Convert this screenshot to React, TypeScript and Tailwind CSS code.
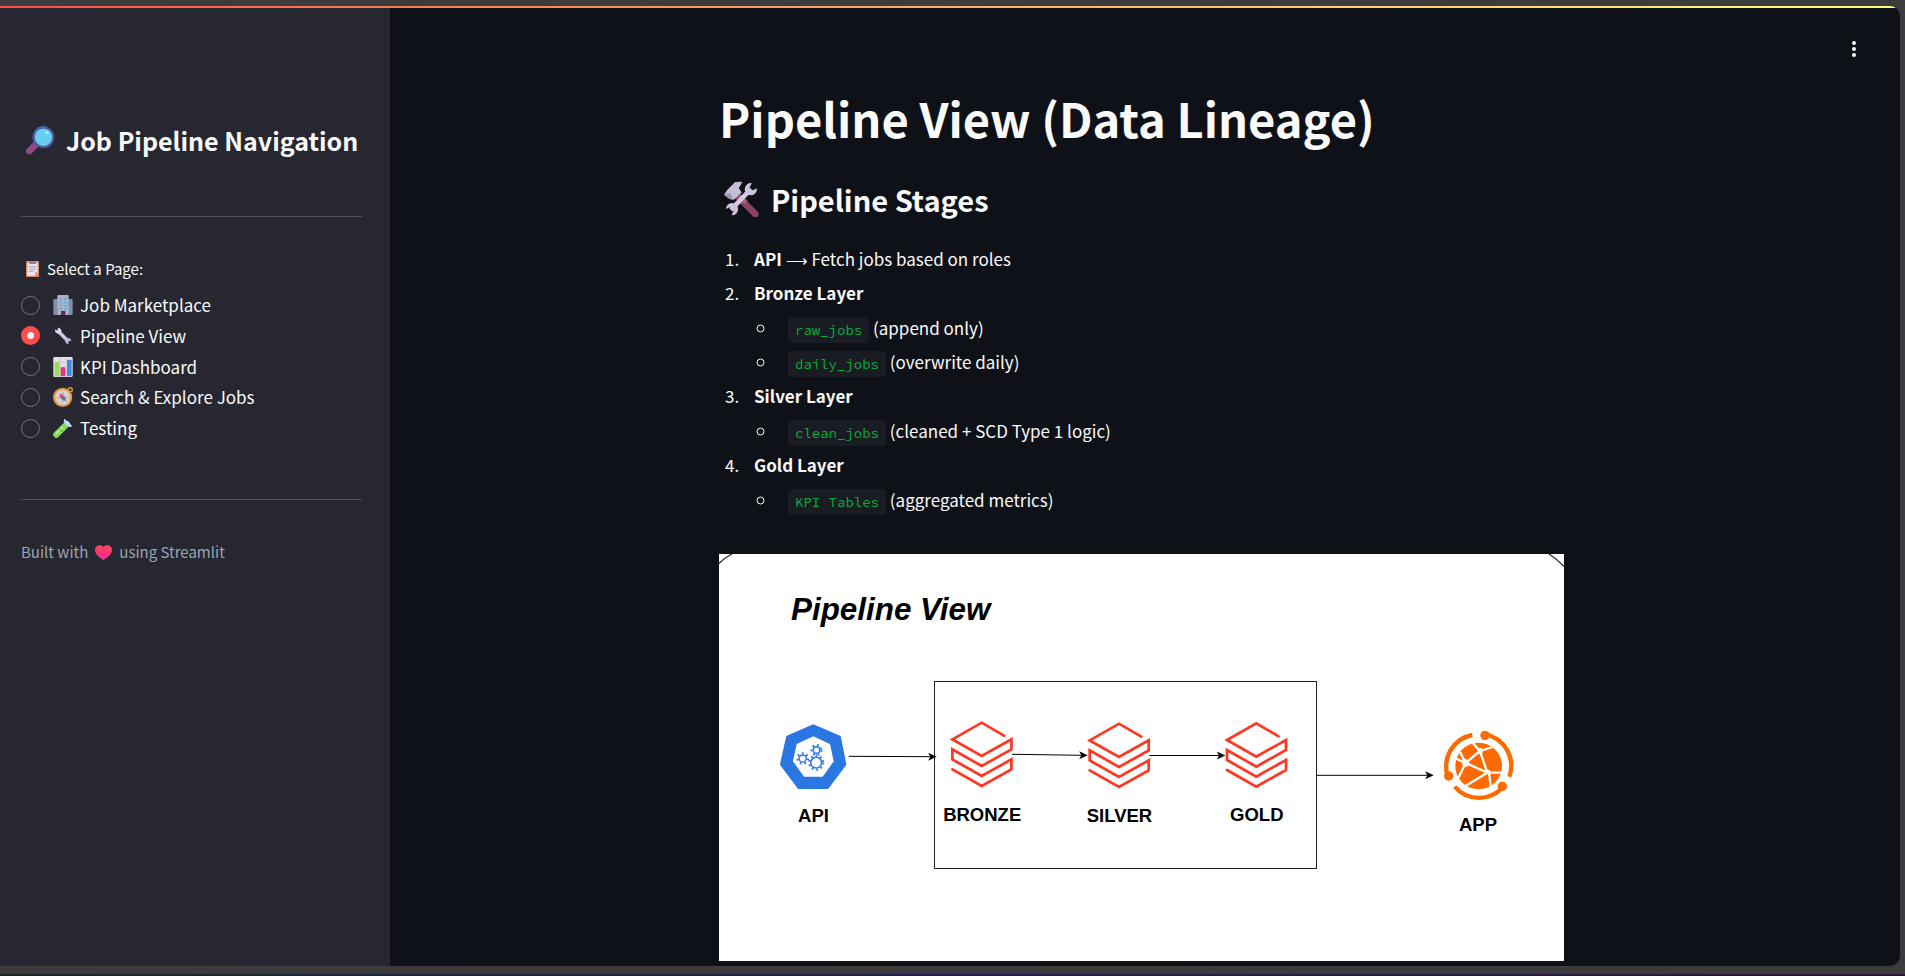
import { useState } from "react";
import type { ReactNode } from "react";

function MagnifierIcon({ className }: { className: string }) {
  return (
    <svg viewBox="0 0 88 88" className={className} aria-hidden="true">
      <path d="M10 76 L32 54" stroke="#8d4b8a" strokeWidth="20" strokeLinecap="round" />
      <path d="M31 55 L36 50" stroke="#5a3f80" strokeWidth="12" />
      <circle cx="53" cy="34" r="30" fill="#62d0ee" stroke="#51549a" strokeWidth="7" />
      <path d="M26 22 A30 30 0 0 1 60 3" fill="none" stroke="#3f6fb0" strokeWidth="5" />
      <circle cx="64" cy="20" r="5" fill="#b9e9fb" />
    </svg>
  );
}

function ToolsIcon({ className }: { className: string }) {
  return (
    <svg viewBox="0 0 100 100" className={className} aria-hidden="true">
      <path d="M40 42 L90 92" stroke="#8a4566" strokeWidth="18" strokeLinecap="round" />
      <path d="M46 42 L64 60" stroke="#a8665f" strokeWidth="12" />
      <path d="M3 38 L12 24 L34 3 L54 2 L44 20 L52 32 L30 52 L18 50 Z" fill="#c4bdd3" />
      <path d="M3 38 L18 50 L30 52 L20 34 Z" fill="#9c93b0" />
      <path d="M22 80 L76 24" stroke="#d3cbe0" strokeWidth="13" />
      <path d="M94 20 A17 17 0 1 1 80 6 L74 18 L82 26 Z" fill="#cdc3de" />
      <path d="M8 78 A17 17 0 1 1 24 95 L30 82 L20 72 Z" fill="#cdc3de" />
    </svg>
  );
}

function ClipboardIcon({ className }: { className: string }) {
  return (
    <svg viewBox="0 0 39 48" className={className} aria-hidden="true">
      <rect width="39" height="48" rx="2" fill="#d98b5e" />
      <path d="M4 5 H35 V34 L27 44 H4 Z" fill="#ebe3f2" />
      <path d="M35 34 L27 44 V34 Z" fill="#bda9c9" />
      <rect x="10" y="1" width="20" height="8" rx="3" fill="#8b8498" />
      <path d="M9 17 H30 M9 24 H30 M9 31 H22" stroke="#a9a0b8" strokeWidth="3" />
    </svg>
  );
}

function OfficeIcon({ className }: { className: string }) {
  return (
    <svg viewBox="0 0 58 60" className={className} aria-hidden="true">
      <rect x="0" y="12" width="58" height="48" rx="3" fill="#8f899f" />
      <rect x="12" y="0" width="34" height="60" rx="3" fill="#b5adc1" />
      <path d="M22 9 V45 M36 9 V45" stroke="#41bdf2" strokeWidth="7" strokeDasharray="6 4" />
      <path d="M6 20 V54 M52 20 V54" stroke="#41a8dc" strokeWidth="4" strokeDasharray="6 4" />
      <rect x="23" y="48" width="13" height="12" fill="#4a3c55" />
    </svg>
  );
}

function WrenchIcon({ className }: { className: string }) {
  return (
    <svg viewBox="0 0 58 58" className={className} aria-hidden="true">
      <path d="M16 16 L42 42" stroke="#cfc6dd" strokeWidth="10" />
      <path d="M5 10 L13 13 L15 4 A12 12 0 0 1 24 20 A12 12 0 0 1 5 10 Z" fill="#ded6ea" />
      <path d="M54 44 L46 43 L44 53 A12 12 0 0 1 36 36 A12 12 0 0 1 54 44 Z" fill="#c5bbd5" />
    </svg>
  );
}

function ChartIcon({ className }: { className: string }) {
  return (
    <svg viewBox="0 0 58 60" className={className} aria-hidden="true">
      <rect width="58" height="60" rx="4" fill="#e6dfed" />
      <path d="M0 15 H58 M0 30 H58 M0 45 H58 M20 0 V60 M39 0 V60" stroke="#c6bcd0" strokeWidth="2" />
      <rect x="4" y="15" width="14" height="43" rx="2" fill="#9bdc55" />
      <rect x="22" y="31" width="14" height="27" rx="2" fill="#e2347f" />
      <rect x="41" y="8" width="14" height="50" rx="2" fill="#3b8de0" />
    </svg>
  );
}

function CompassIcon({ className }: { className: string }) {
  return (
    <svg viewBox="0 0 58 58" className={className} aria-hidden="true">
      <circle cx="50" cy="8" r="6" fill="none" stroke="#d79a35" strokeWidth="4" />
      <circle cx="28" cy="30" r="25" fill="#dccfd4" stroke="#dd9a3c" strokeWidth="6" />
      <path d="M28 11 L32 26 L47 30 L32 34 L28 49 L24 34 L9 30 L24 26 Z" fill="#b3a4b0" />
      <path d="M17 18 L32 26 L24 34 Z" fill="#e03d5e" />
      <path d="M40 43 L32 26 L24 34 Z" fill="#6e6884" />
    </svg>
  );
}

function TestTubeIcon({ className }: { className: string }) {
  return (
    <svg viewBox="0 0 60 60" className={className} aria-hidden="true">
      <path d="M10 50 L42 18" stroke="#a9cdf0" strokeWidth="18" strokeLinecap="round" />
      <path d="M34 2 L58 24 L50 28 L32 10 Z" fill="#bfe0fb" />
      <path d="M10 50 L33 27" stroke="#86d94a" strokeWidth="17" strokeLinecap="round" />
      <path d="M11 46 L28 29" stroke="#c3f07c" strokeWidth="5" strokeLinecap="round" />
      <circle cx="26" cy="38" r="3" fill="#3ea63a" />
      <circle cx="19" cy="33" r="3" fill="#4db445" />
    </svg>
  );
}

function HeartIcon({ className }: { className: string }) {
  return (
    <svg viewBox="0 0 52 46" className={className} aria-hidden="true">
      <defs>
        <linearGradient id="heart" x1="0" y1="0" x2="0" y2="1">
          <stop offset="0" stopColor="#f74a5c" />
          <stop offset="0.6" stopColor="#fa2f76" />
          <stop offset="1" stopColor="#e63bb4" />
        </linearGradient>
      </defs>
      <path
        d="M26 6 C20 -3 0 -2 0 15 C0 29 14 38 26 46 C38 38 52 29 52 15 C52 -2 32 -3 26 6 Z"
        fill="url(#heart)"
      />
    </svg>
  );
}

const pages: { name: string; icon: ReactNode }[] = [
  { name: "Job Marketplace", icon: <OfficeIcon className="size-5" /> },
  { name: "Pipeline View", icon: <WrenchIcon className="size-5" /> },
  { name: "KPI Dashboard", icon: <ChartIcon className="size-5" /> },
  { name: "Search & Explore Jobs", icon: <CompassIcon className="size-5" /> },
  { name: "Testing", icon: <TestTubeIcon className="size-5" /> },
];

function Sidebar() {
  const [page, setPage] = useState("Pipeline View");
  return (
    <aside className="w-[390px] shrink-0 bg-[#262730] pl-[21px] pr-7 pt-[112px]">
      <h2 className="flex h-10 items-center gap-[11px] whitespace-nowrap pl-[5px] text-[25px] font-semibold leading-10">
        <MagnifierIcon className="size-[29px]" />
        Job Pipeline Navigation
      </h2>
      <hr className="mt-14 border-[#4d4e56]" />
      <fieldset className="mt-10">
        <legend className="flex h-6 items-center gap-2 pl-[5px] text-[15px] leading-6">
          <ClipboardIcon className="h-4 w-[13px]" />
          Select a Page:
        </legend>
        <div className="mt-[9px] flex h-[153px] flex-col justify-between">
          {pages.map((p) => (
            <label key={p.name} className="flex h-[30px] items-center text-[17px] leading-[30px]">
              <input
                type="radio"
                name="page"
                checked={page === p.name}
                onChange={() => setPage(p.name)}
                className="mr-[13px] size-[19px] appearance-none rounded-full border border-[#75767c] checked:border-[6px] checked:border-[#ff4b4b] checked:bg-[#f4f4f8]"
              />
              <span className="mr-[7px]">{p.icon}</span>
              {p.name}
            </label>
          ))}
        </div>
      </fieldset>
      <hr className="mt-14 border-[#4d4e56]" />
      <p className="mt-10 flex h-6 items-center gap-[7px] text-[15px] leading-6 text-[#9aa3b4]">
        Built with
        <HeartIcon className="h-[15px] w-[17px]" />
        using Streamlit
      </p>
    </aside>
  );
}

function Code({ children }: { children: string }) {
  return (
    <code className="rounded bg-[#1a1c24] px-[7px] py-1 font-['Source_Code_Pro','DejaVu_Sans_Mono',monospace] text-[14px] leading-5 text-[#09ab3b]">
      {children}
    </code>
  );
}

const stages = [
  { name: "API", note: "Fetch jobs based on roles", tables: [] },
  {
    name: "Bronze Layer",
    note: "",
    tables: [
      ["raw_jobs", "(append only)"],
      ["daily_jobs", "(overwrite daily)"],
    ],
  },
  { name: "Silver Layer", note: "", tables: [["clean_jobs", "(cleaned + SCD Type 1 logic)"]] },
  { name: "Gold Layer", note: "", tables: [["KPI Tables", "(aggregated metrics)"]] },
];

function Layers({ x, y, label }: { x: number; y: number; label: string }) {
  return (
    <g transform={`translate(${x} ${y})`}>
      <path
        d="M22.3 13 L0 0 L-29.3 16.7 L0 33.3 L29.7 16.7 V26.7 L0 43.3 L-29.3 26.7 V36.7 L0 53.3 L29.7 36.7 V46.7 L0 63.3 L-29.3 46.7"
        fill="none"
        stroke="#ff3621"
        strokeWidth="2.7"
        strokeLinecap="round"
      />
      <text x="0.5" y="98" textAnchor="middle" fontSize="18.5">
        {label}
      </text>
    </g>
  );
}

function Gear({ x, y, r }: { x: number; y: number; r: number }) {
  return (
    <g transform={`translate(${x} ${y})`} fill="none" stroke="#2a76e3">
      <circle r={r} strokeWidth="1.5" />
      <circle r={r + 1.6} strokeWidth="2.2" strokeDasharray="1.7 2.9" />
    </g>
  );
}

function Arrow({ x1, y1, x2, y2 }: { x1: number; y1: number; x2: number; y2: number }) {
  return (
    <g>
      <path d={`M${x1} ${y1} L${x2 - 6} ${y2}`} stroke="#000" strokeWidth="1" />
      <path d={`M${x2} ${y2} l-8.5 -4 l2.2 4 l-2.2 4 Z`} fill="#000" />
    </g>
  );
}

function PipelineDiagram() {
  return (
    <svg
      viewBox="0 0 845 407"
      className="block w-full bg-white font-['Liberation_Sans',Arial,sans-serif] font-bold"
      role="img"
      aria-label="Pipeline View"
    >
      <path d="M0 9.5 Q6 3.5 13 0 M830 0 Q838 5 845 12.5" fill="none" stroke="#333" strokeWidth="1.3" />
      <text x="72" y="66" fontSize="31.4" fontStyle="italic">
        Pipeline View
      </text>
      <rect x="215.5" y="127.5" width="382" height="187" fill="none" stroke="#222" strokeWidth="1" />

      <path
        d="M94.3 171.8 L120.5 183.2 L125.8 210.3 L108.3 233.5 H80 L62.5 210.3 L68.5 183.2 Z"
        fill="#2a76e3"
        stroke="#2a76e3"
        strokeWidth="3"
        strokeLinejoin="round"
      />
      <path
        d="M94.3 182.3 L111 190 L114.7 207.3 L103.7 222.7 H85 L74 207.3 L77.7 190 Z"
        fill="#fff"
      />
      <Gear x={97.5} y={196} r={3.3} />
      <Gear x={83.7} y={204.5} r={3.6} />
      <Gear x={97.2} y={208.7} r={5.4} />
      <text x="94.5" y="267.5" textAnchor="middle" fontSize="18.5">
        API
      </text>

      <Layers x={262.7} y={168.7} label="BRONZE" />
      <Layers x={400} y={169.7} label="SILVER" />
      <Layers x={537.3} y={169.3} label="GOLD" />

      <Arrow x1={129.7} y1={202.3} x2={217.7} y2={202.7} />
      <Arrow x1={293} y1={200.3} x2={368.7} y2={201.3} />
      <Arrow x1={430.3} y1={201.5} x2={506.3} y2={201.5} />
      <Arrow x1={598} y1={221.3} x2={714.7} y2={221.3} />

      <g transform="translate(401 116) scale(0.33333)">
        <g fill="none" stroke="#ff6a00" strokeWidth="13">
          <path d="M1095 193 A96 96 0 0 1 1168 320" />
          <path d="M1147 353 A96 96 0 0 1 1004 350" />
          <path d="M983 318 A96 96 0 0 1 1057 195" />
        </g>
        <g fill="#ff6a00">
          <circle cx="1095" cy="196" r="14" />
          <circle cx="986" cy="318" r="14" />
          <circle cx="1147" cy="349" r="14" />
          <circle cx="1076" cy="288" r="70" />
        </g>
        <g fill="none" stroke="#fff" strokeWidth="7">
          <path d="M1052 212 L1080 243 L1037 279 L1000 262 M1037 279 L1012 330 M1037 279 L1102 308 L1080 243 L1128 228 M1102 308 L1150 308 M1102 308 L1030 352 M1106 300 L1113 356" />
          <path d="M1020 246 L1037 279" />
        </g>
        <circle cx="1037" cy="279" r="11" fill="#fff" />
        <circle cx="1080" cy="243" r="9" fill="#fff" />
      </g>
      <text x="759" y="276.5" textAnchor="middle" fontSize="18.5">
        APP
      </text>
    </svg>
  );
}

export default function App() {
  return (
    <div className="flex min-h-screen flex-col bg-[#3c3c3c] pt-[6px] font-['Noto_Sans_CJK_SC','Noto_Sans',sans-serif] text-[#fafafa]">
      <div className="mr-[5px] flex flex-1 flex-col overflow-hidden rounded-r-[10px] bg-[#0e1117]">
        <div className="h-[2px] bg-linear-to-r from-[#ff4b4b] to-[#fffd80]" />
        <div className="relative flex flex-1">
          <Sidebar />
          <main className="flex-1 pb-1 pl-8 pr-[39px] pt-[76px]">
            <button
              type="button"
              aria-label="Main menu"
              className="absolute right-8 top-[27px] flex size-7 flex-col items-center justify-center gap-[2px]"
            >
              <span className="size-1 rounded-full bg-[#fafafa]" />
              <span className="size-1 rounded-full bg-[#fafafa]" />
              <span className="size-1 rounded-full bg-[#fafafa]" />
            </button>
            <div className="mx-auto max-w-[845px]">
              <h1 className="text-[47px] font-bold leading-[68px]">Pipeline View (Data Lineage)</h1>
              <h2 className="mt-[23px] flex h-12 items-center gap-3 pl-1 text-[29px] font-semibold leading-[48px]">
                <ToolsIcon className="size-9" />
                Pipeline Stages
              </h2>
              <ol className="mt-[22px] list-decimal text-[17px] leading-[28px]">
                {stages.map((s) => (
                  <li key={s.name} className="mb-[6px] ml-6 pl-[11px]">
                    <strong className="font-bold">{s.name}</strong>
                    {s.note && (
                      <>
                        {" "}
                        <span className="text-[15px] leading-5">⟶</span> {s.note}
                      </>
                    )}
                    {s.tables.length > 0 && (
                      <ul className="mt-[7px] list-[circle]">
                        {s.tables.map(([table, note]) => (
                          <li key={table} className="mb-[6px] ml-[23px] pl-[11px]">
                            <Code>{table}</Code> {note}
                          </li>
                        ))}
                      </ul>
                    )}
                  </li>
                ))}
              </ol>
              <div className="mt-10">
                <PipelineDiagram />
              </div>
            </div>
          </main>
        </div>
      </div>
      <div className="mt-2 h-[2px] bg-linear-to-r from-[#1c2626] via-[#1f1f50] to-[#2c1438]" />
    </div>
  );
}
